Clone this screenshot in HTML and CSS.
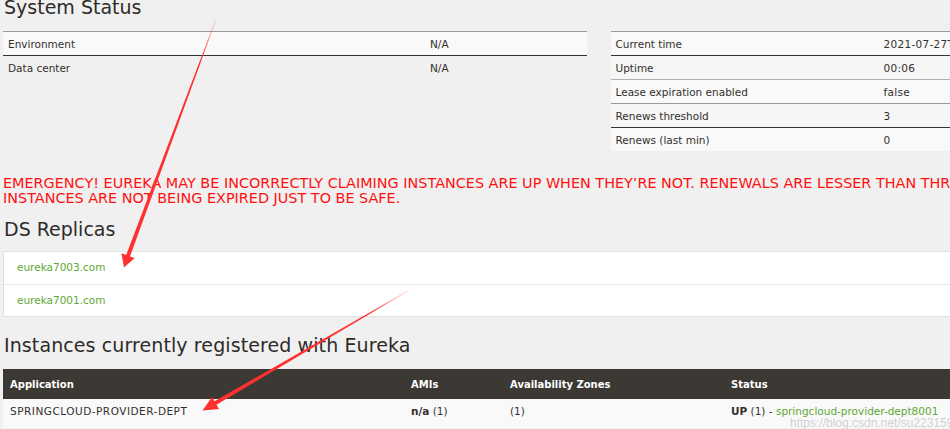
FILE: index.html
```html
<!DOCTYPE html>
<html>
<head>
<meta charset="utf-8">
<link rel="stylesheet" href="styles.css">
</head>
<body>
<div class="page">
  <h1 class="heading top">System Status</h1>
  <div class="sys">
    <table class="kv kv-left">
      <colgroup><col class="c-left"><col></colgroup>
      <tr class="odd"><td>Environment</td><td>N/A</td></tr>
      <tr class="dark"><td>Data center</td><td>N/A</td></tr>
    </table>
    <table class="kv kv-right">
      <colgroup><col class="c-right"><col></colgroup>
      <tr class="odd"><td>Current time</td><td>2021-07-27T16:36:50 +0800</td></tr>
      <tr class="dark"><td>Uptime</td><td>00:06</td></tr>
      <tr class="odd light"><td>Lease expiration enabled</td><td>false</td></tr>
      <tr><td>Renews threshold</td><td>3</td></tr>
      <tr class="odd dark"><td>Renews (last min)</td><td>0</td></tr>
    </table>
  </div>
  <div class="emergency">
    <div class="eline">EMERGENCY! EUREKA MAY BE INCORRECTLY CLAIMING INSTANCES ARE UP WHEN THEY’RE NOT. RENEWALS ARE LESSER THAN THRESHOLD AND HENCE THE</div>
    <div class="eline">INSTANCES ARE NOT BEING EXPIRED JUST TO BE SAFE.</div>
  </div>
  <h1 class="heading ds">DS Replicas</h1>
  <div class="replicas">
    <div class="replica"><a href="#">eureka7003.com</a></div>
    <div class="replica second"><a href="#">eureka7001.com</a></div>
  </div>
  <h1 class="heading inst">Instances currently registered with Eureka</h1>
  <table class="instances">
    <colgroup><col class="i1"><col class="i2"><col class="i3"><col></colgroup>
    <tr class="head"><th>Application</th><th>AMIs</th><th>Availability Zones</th><th>Status</th></tr>
    <tr class="irow"><td class="app">SPRINGCLOUD-PROVIDER-DEPT</td><td><b>n/a</b> (1)</td><td>(1)</td><td><b>UP</b> (1) - <a href="#">springcloud-provider-dept8001</a></td></tr>
  </table>
</div>
<div class="watermark">https://blog.csdn.net/su2231595742</div>
<svg class="arrows" width="950" height="429" viewBox="0 0 950 429">
  <defs>
    <linearGradient id="g1" gradientUnits="userSpaceOnUse" x1="216.5" y1="18" x2="200" y2="63">
      <stop offset="0" stop-color="#ff3030" stop-opacity="0.15"/>
      <stop offset="1" stop-color="#ff3030" stop-opacity="1"/>
    </linearGradient>
    <linearGradient id="g2" gradientUnits="userSpaceOnUse" x1="409.5" y1="290" x2="370" y2="313">
      <stop offset="0" stop-color="#ff3030" stop-opacity="0.15"/>
      <stop offset="1" stop-color="#ff3030" stop-opacity="1"/>
    </linearGradient>
  </defs>
  <polygon fill="url(#g1)" points="216.1,17.9 126.2,255.0 121.5,253.3 124,267.5 134.7,258.1 130.0,256.4 216.9,18.1"/>
  <polygon fill="url(#g2)" points="409.3,289.65 214.5,401.3 212.0,396.9 202.5,410.5 219.0,409.1 216.5,404.7 409.7,290.35"/>
</svg>
</body>
</html>
```
FILE: styles.css
```css
html, body {
  margin: 0;
  padding: 0;
  overflow: hidden;
  background: #f0f0f0;
}
body {
  position: relative;
  width: 950px;
  height: 429px;
  font-family: "DejaVu Sans", sans-serif;
  font-size: 10.5px;
  color: #34302d;
}
.page {
  width: 1190px;
  margin-left: 3px;
}
.heading {
  font-family: "DejaVu Sans", sans-serif;
  font-weight: normal;
  font-size: 19px;
  line-height: 22px;
  color: #2f2b28;
  margin: 0 0 0 1px;
  white-space: nowrap;
}
.heading.top { margin-top: -4px; margin-bottom: 13px; }
.heading.ds { margin-top: 12px; margin-bottom: 11px; }
.heading.inst { margin-top: 17px; margin-bottom: 13px; letter-spacing: 0.1px; }

.sys {
  display: flex;
  gap: 24px;
  align-items: flex-start;
}
.kv {
  border-collapse: collapse;
  table-layout: fixed;
}
.kv-left { width: 584px; }
.kv-right { width: 583px; background: #f6f6f6; }
.c-left { width: 422px; }
.c-right { width: 268px; }
.kv td {
  height: 23px;
  line-height: 22px;
  padding: 0 5px;
  white-space: nowrap;
  overflow: hidden;
}
.kv tr { border-top: 1px solid #9a9a9a; }
.kv tr.dark { border-top-color: #333; }
.kv tr.light { border-top-color: #b0b0b0; }
.kv tr.odd { background: #f9f9f9; }
.kv-right td + td { letter-spacing: 0.3px; }

.emergency {
  margin-top: 25px;
  color: #ff1010;
  font-size: 14.4px;
  line-height: 15px;
  white-space: nowrap;
}

.replicas {
  background: #fff;
  border: 1px solid #e0e0e0;
}
.replica {
  height: 32px;
  line-height: 31px;
  padding-left: 13px;
}
.replica.second {
  height: 31px;
  line-height: 31px;
  border-top: 1px solid #e8e8e8;
}
a {
  color: #5fa834;
  text-decoration: none;
}

.instances {
  width: 1190px;
  border-collapse: collapse;
  table-layout: fixed;
}
.i1 { width: 401px; }
.i2 { width: 99px; }
.i3 { width: 221px; }
.instances th {
  background: #3c3833;
  color: #fff;
  font-weight: bold;
  font-size: 10px;
  text-align: left;
  height: 30px;
  padding: 0 7px;
}
.instances td {
  background: #f9f9f9;
  padding: 6px 7px 10px;
  line-height: 13px;
  vertical-align: top;
  white-space: nowrap;
}
.instances td.app { letter-spacing: 0.5px; }

.watermark {
  position: absolute;
  left: 790px;
  top: 416px;
  font-family: "Liberation Sans", sans-serif;
  font-size: 12px;
  color: rgba(190, 190, 190, 0.7);
  white-space: nowrap;
}
.arrows {
  position: absolute;
  left: 0;
  top: 0;
  pointer-events: none;
}
```
